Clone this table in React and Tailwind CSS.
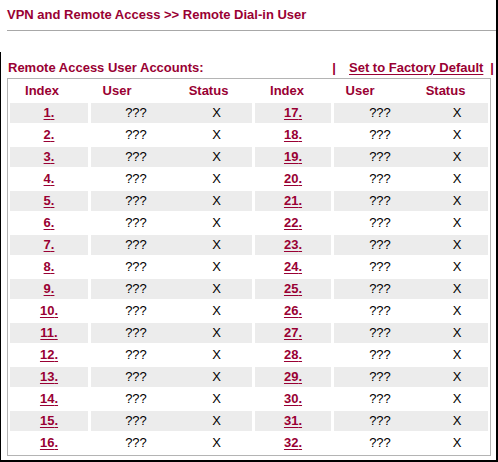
import React from "react";

const rows = Array.from({ length: 16 }, (_, i) => i + 1);

function Cell({ gray, className = "", children }) {
  return (
    <div
      className={`h-[20px] flex items-center ${gray ? "bg-[#ececec]" : "bg-white"} ${className}`}
    >
      {children}
    </div>
  );
}

function IndexLink({ n }) {
  return (
    <a href="#" className="font-bold text-[#990033] underline underline-offset-2">
      {n}.
    </a>
  );
}

export default function App() {
  return (
    <div className="w-[498px] h-[462px] bg-white border-r-2 border-b-2 border-black font-['Liberation_Sans',Arial,sans-serif] text-[13px] text-black">
      <h1 className="pt-[7px] pl-[7px] leading-[16px] text-[13px] font-bold text-[#990033]">
        VPN and Remote Access &gt;&gt; Remote Dial-in User
      </h1>
      <div className="mt-[7px] ml-[7px] h-px bg-[#a8a8a8]" />

      <div className="mt-[21px] border-l border-black pl-[6px] pr-[2px] pt-[8px] pb-[5px]">
        <div className="flex justify-between items-center leading-[16px] font-bold text-[#990033]">
          <span className="pl-px">Remote Access User Accounts:</span>
          <span className="flex items-center">
            <span>|</span>
            <a href="#" className="ml-[13px] underline underline-offset-2">
              Set to Factory Default
            </a>
            <span className="ml-[7px]">|</span>
          </span>
        </div>

        <div className="mt-[2px] w-[484px] border border-[#b4b4b4] p-[2px] flex flex-col gap-y-[2px]">
          <div className="flex h-[20px] items-center font-bold text-[#990033] text-center">
            <span className="w-[64px]">Index</span>
            <span className="w-[86px]">User</span>
            <span className="w-[97px]">Status</span>
            <span className="w-[60px]">Index</span>
            <span className="w-[86px]">User</span>
            <span className="w-[85px]">Status</span>
          </div>

          {rows.map((n) => {
            const gray = n % 2 === 1;
            return (
              <div
                key={n}
                className="grid grid-cols-[78px_161px_76px_154px] gap-x-[3px]"
              >
                <Cell gray={gray} className="justify-center">
                  <IndexLink n={n} />
                </Cell>
                <Cell gray={gray}>
                  <span className="w-[90px] text-center">???</span>
                  <span className="w-[71px] text-center">X</span>
                </Cell>
                <Cell gray={gray} className="justify-center">
                  <IndexLink n={n + 16} />
                </Cell>
                <Cell gray={gray}>
                  <span className="w-[92px] text-center">???</span>
                  <span className="w-[62px] text-center">X</span>
                </Cell>
              </div>
            );
          })}
        </div>
      </div>
    </div>
  );
}
